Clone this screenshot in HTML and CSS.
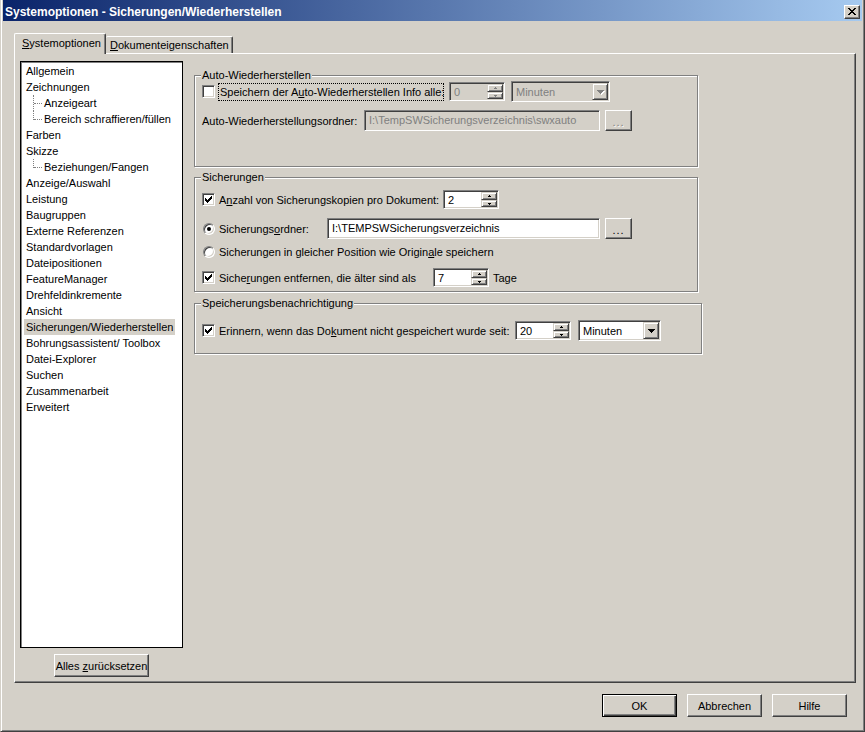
FILE: index.html
```html
<!DOCTYPE html>
<html lang="de">

<head>
    <meta charset="UTF-8">
    <meta name="viewport" content="width=device-width, initial-scale=1.0">
    <title>Systemoptionen - Sicherungen/Wiederherstellen</title>
    <link rel="stylesheet" href="styles.css">
</head>

<body>
    <div class="window">
        <div class="titlebar">
            <span class="title">Systemoptionen - Sicherungen/Wiederherstellen</span>
            <span class="close-btn">
                <svg width="8" height="7" viewBox="0 0 8 7" shape-rendering="crispEdges">
                    <path d="M0 0h2v1H0z M6 0h2v1H6z M1 1h2v1H1z M5 1h2v1H5z M2 2h4v1H2z M3 3h2v1H3z M2 4h4v1H2z M1 5h2v1H1z M5 5h2v1H5z M0 6h2v1H0z M6 6h2v1H6z" fill="#000" />
                </svg>
            </span>
        </div>

        <div class="dialog">
            <div class="tabs">
                <div class="tab tab-active"><u>S</u>ystemoptionen</div>
                <div class="tab"><u>D</u>okumenteigenschaften</div>
            </div>

            <div class="panel">
                <!-- linke Seite: Baum + Zuruecksetzen -->
                <div class="side">
                    <ul class="tree">
                        <li>Allgemein</li>
                        <li>Zeichnungen</li>
                        <li class="sub">Anzeigeart</li>
                        <li class="sub last">Bereich schraffieren/füllen</li>
                        <li>Farben</li>
                        <li>Skizze</li>
                        <li class="sub last">Beziehungen/Fangen</li>
                        <li>Anzeige/Auswahl</li>
                        <li>Leistung</li>
                        <li>Baugruppen</li>
                        <li>Externe Referenzen</li>
                        <li>Standardvorlagen</li>
                        <li>Dateipositionen</li>
                        <li>FeatureManager</li>
                        <li>Drehfeldinkremente</li>
                        <li>Ansicht</li>
                        <li class="selected">Sicherungen/Wiederherstellen</li>
                        <li>Bohrungsassistent/ Toolbox</li>
                        <li>Datei-Explorer</li>
                        <li>Suchen</li>
                        <li>Zusammenarbeit</li>
                        <li>Erweitert</li>
                    </ul>
                    <button class="btn btn-reset">Alles <u>z</u>urücksetzen</button>
                </div>

                <!-- rechte Seite: Gruppen -->
                <div class="content">
                    <div class="group group-auto">
                        <div class="group-title">Auto-Wiederherstellen</div>
                        <div class="row row-auto-save">
                            <span class="check"></span>
                            <span class="label label-focus">Speichern der A<u>u</u>to-Wiederherstellen Info alle:</span>
                            <div class="spin disabled">
                                <span class="spin-val">0</span>
                                <span class="spin-btns">
                                    <span class="spin-up">
                                        <svg width="3" height="2" viewBox="0 0 3 2" shape-rendering="crispEdges"><path d="M1 0h1v1h1v1H0V1h1z" /></svg>
                                    </span>
                                    <span class="spin-down">
                                        <svg width="3" height="2" viewBox="0 0 3 2" shape-rendering="crispEdges"><path d="M0 0h3v1H2v1H1V1H0z" /></svg>
                                    </span>
                                </span>
                            </div>
                            <div class="combo combo-auto disabled">
                                <span class="combo-val">Minuten</span>
                                <span class="combo-btn">
                                    <svg width="7" height="4" viewBox="0 0 7 4" shape-rendering="crispEdges"><path d="M0 0h7v1H6v1H5v1H4v1H3V3H2V2H1V1H0z" /></svg>
                                </span>
                            </div>
                        </div>
                        <div class="row row-auto-dir">
                            <span class="label w-auto-dir">Auto-Wiederherstellungsordner:</span>
                            <div class="edit edit-auto disabled">I:\TempSWSicherungsverzeichnis\swxauto</div>
                            <button class="btn btn-browse disabled">...</button>
                        </div>
                    </div>

                    <div class="group group-backup">
                        <div class="group-title">Sicherungen</div>
                        <div class="row row-copies">
                            <span class="check">
                                <svg width="7" height="7" viewBox="0 0 7 7" shape-rendering="crispEdges"><path d="M0 2h1v3H0z M1 3h1v3H1z M2 4h1v3H2z M3 3h1v3H3z M4 2h1v3H4z M5 1h1v3H5z M6 0h1v3H6z" /></svg>
                            </span>
                            <span class="label w-copies">A<u>n</u>zahl von Sicherungskopien pro Dokument:</span>
                            <div class="spin">
                                <span class="spin-val">2</span>
                                <span class="spin-btns">
                                    <span class="spin-up">
                                        <svg width="3" height="2" viewBox="0 0 3 2" shape-rendering="crispEdges"><path d="M1 0h1v1h1v1H0V1h1z" /></svg>
                                    </span>
                                    <span class="spin-down">
                                        <svg width="3" height="2" viewBox="0 0 3 2" shape-rendering="crispEdges"><path d="M0 0h3v1H2v1H1V1H0z" /></svg>
                                    </span>
                                </span>
                            </div>
                        </div>
                        <div class="row row-folder">
                            <span class="radio radio-on"></span>
                            <span class="label w-folder">Sicherungs<u>o</u>rdner:</span>
                            <div class="edit edit-folder">I:\TEMPSWSicherungsverzeichnis</div>
                            <button class="btn btn-browse">...</button>
                        </div>
                        <div class="row row-same">
                            <span class="radio"></span>
                            <span class="label">Sicherungen in gleicher Position wie Origin<u>a</u>le speichern</span>
                        </div>
                        <div class="row row-remove">
                            <span class="check">
                                <svg width="7" height="7" viewBox="0 0 7 7" shape-rendering="crispEdges"><path d="M0 2h1v3H0z M1 3h1v3H1z M2 4h1v3H2z M3 3h1v3H3z M4 2h1v3H4z M5 1h1v3H5z M6 0h1v3H6z" /></svg>
                            </span>
                            <span class="label w-remove">Siche<u>r</u>ungen entfernen, die älter sind als</span>
                            <div class="spin">
                                <span class="spin-val">7</span>
                                <span class="spin-btns">
                                    <span class="spin-up">
                                        <svg width="3" height="2" viewBox="0 0 3 2" shape-rendering="crispEdges"><path d="M1 0h1v1h1v1H0V1h1z" /></svg>
                                    </span>
                                    <span class="spin-down">
                                        <svg width="3" height="2" viewBox="0 0 3 2" shape-rendering="crispEdges"><path d="M0 0h3v1H2v1H1V1H0z" /></svg>
                                    </span>
                                </span>
                            </div>
                            <span class="label unit">Tage</span>
                        </div>
                    </div>

                    <div class="group group-notify">
                        <div class="group-title">Speicherungsbenachrichtigung</div>
                        <div class="row row-remind">
                            <span class="check">
                                <svg width="7" height="7" viewBox="0 0 7 7" shape-rendering="crispEdges"><path d="M0 2h1v3H0z M1 3h1v3H1z M2 4h1v3H2z M3 3h1v3H3z M4 2h1v3H4z M5 1h1v3H5z M6 0h1v3H6z" /></svg>
                            </span>
                            <span class="label w-remind">Erinnern, wenn das Do<u>k</u>ument nicht gespeichert wurde seit:</span>
                            <div class="spin">
                                <span class="spin-val">20</span>
                                <span class="spin-btns">
                                    <span class="spin-up">
                                        <svg width="3" height="2" viewBox="0 0 3 2" shape-rendering="crispEdges"><path d="M1 0h1v1h1v1H0V1h1z" /></svg>
                                    </span>
                                    <span class="spin-down">
                                        <svg width="3" height="2" viewBox="0 0 3 2" shape-rendering="crispEdges"><path d="M0 0h3v1H2v1H1V1H0z" /></svg>
                                    </span>
                                </span>
                            </div>
                            <div class="combo combo-remind">
                                <span class="combo-val">Minuten</span>
                                <span class="combo-btn">
                                    <svg width="7" height="4" viewBox="0 0 7 4" shape-rendering="crispEdges"><path d="M0 0h7v1H6v1H5v1H4v1H3V3H2V2H1V1H0z" /></svg>
                                </span>
                            </div>
                        </div>
                    </div>
                </div>
            </div>

            <div class="footer">
                <button class="btn btn-default">OK</button>
                <button class="btn">Abbrechen</button>
                <button class="btn">Hilfe</button>
            </div>
        </div>
    </div>
</body>

</html>
```

FILE: styles.css
```css
* {
    margin: 0;
    padding: 0;
    box-sizing: border-box;
}

body {
    background-color: #d4d0c8;
    font-family: "Liberation Sans", Arial, sans-serif;
    font-size: 11px;
    color: #000;
}

ul,
li {
    list-style: none;
}

/* Fensterrahmen */
.window {
    display: flex;
    flex-direction: column;
    width: 865px;
    height: 732px;
    padding: 0 2px 2px 2px;
    border-left: 1px solid #d4d0c8;
    border-right: 1px solid #404040;
    border-bottom: 1px solid #404040;
    box-shadow: inset 1px 0 #fff, inset -1px -1px #808080;
}

.titlebar {
    display: flex;
    align-items: center;
    justify-content: space-between;
    height: 21px;
    padding: 2px 2px 0 2px;
    background: linear-gradient(to right, #0a246a, #a6caf0);
    color: #fff;
    font-size: 12px;
    font-weight: bold;
}

.close-btn {
    display: flex;
    align-items: center;
    justify-content: center;
    width: 16px;
    height: 14px;
    background-color: #d4d0c8;
    border: 1px solid;
    border-color: #fff #404040 #404040 #fff;
    box-shadow: inset -1px -1px #808080;
}

.close-btn svg {
    display: block;
}

.dialog {
    flex: 1;
    padding: 12px 6px 0 11px;
}

/* Reiter */
.tabs {
    display: flex;
    align-items: flex-end;
    height: 20px;
}

.tab {
    width: 127px;
    height: 17px;
    padding: 2px 0 0 4px;
    line-height: 13px;
    white-space: nowrap;
    border-top: 1px solid #fff;
    border-right: 1px solid #404040;
    border-radius: 2px 2px 0 0;
    box-shadow: inset -1px 0 #808080;
}

.tab-active {
    position: relative;
    z-index: 1;
    width: 92px;
    height: 21px;
    margin-bottom: -1px;
    padding: 3px 0 0 7px;
    border-left: 1px solid #fff;
    background-color: #d4d0c8;
}

.panel {
    display: flex;
    height: 630px;
    padding: 7px 0 0 5px;
    border-top: 1px solid #fff;
    border-left: 1px solid #fff;
    border-right: 1px solid #404040;
    border-bottom: 1px solid #404040;
    box-shadow: inset -1px -1px #808080;
}

/* Baum */
.side {
    display: flex;
    flex-direction: column;
    width: 163px;
}

.tree {
    height: 587px;
    padding: 1px 0 0 3px;
    background-color: #fff;
    border: 1px solid #000;
    box-shadow: inset 1px 1px #808080;
}

.tree li {
    position: relative;
    width: fit-content;
    height: 16px;
    padding: 0 2px;
    line-height: 16px;
    white-space: nowrap;
}

.tree li.sub {
    padding-left: 20px;
}

.tree li.sub::before {
    content: '';
    position: absolute;
    left: 9px;
    top: 0;
    bottom: 0;
    border-left: 1px dotted #808080;
}

.tree li.sub.last::before {
    bottom: auto;
    height: 9px;
}

.tree li.sub::after {
    content: '';
    position: absolute;
    left: 10px;
    top: 8px;
    width: 8px;
    border-top: 1px dotted #808080;
}

.tree li.selected {
    background-color: #d4d0c8;
}

/* Schaltflaechen */
.btn {
    width: 75px;
    height: 23px;
    font: inherit;
    color: #000;
    background-color: #d4d0c8;
    border: 1px solid;
    border-color: #fff #404040 #404040 #fff;
    box-shadow: inset -1px -1px #808080;
}

.btn-default {
    border-color: #000;
    box-shadow: inset 1px 1px #fff, inset -1px -1px #404040, inset -2px -2px #808080;
}

.btn-reset {
    width: 95px;
    margin: 6px auto 0;
}

.btn-browse {
    width: 27px;
    height: 21px;
    margin-left: 5px;
    padding-top: 2px;
    letter-spacing: 1px;
}

.btn-browse.disabled {
    color: #808080;
    text-shadow: 1px 1px #fff;
}

/* Gruppen rechts */
.content {
    display: flex;
    flex-direction: column;
    margin: 14px 0 0 11px;
}

.group {
    width: 504px;
    padding: 0 7px;
    border: 1px solid #808080;
    box-shadow: inset 1px 1px #fff, 1px 1px #fff;
}

.group-title {
    width: fit-content;
    margin: -7px 0 0 -1px;
    padding: 0 1px;
    line-height: 13px;
    background-color: #d4d0c8;
}

.group-auto {
    padding-bottom: 35px;
}

.group-backup {
    margin-top: 10px;
    padding-bottom: 4px;
}

.group-notify {
    width: 508px;
    margin-top: 11px;
    padding-bottom: 12px;
}

.row {
    display: flex;
    align-items: center;
    white-space: nowrap;
}

.row-auto-save {
    height: 21px;
    margin-top: -1px;
}

.row-auto-dir {
    height: 21px;
    margin-top: 8px;
}

.row-copies {
    height: 19px;
    margin-top: 6px;
}

.row-folder {
    height: 21px;
    margin-top: 9px;
}

.row-same {
    height: 16px;
    margin-top: 5px;
}

.row-remove {
    height: 19px;
    margin-top: 8px;
}

.row-remind {
    height: 21px;
    margin-top: 10px;
}

.label-focus {
    width: 226px;
    height: 18px;
    margin: 0 5px 0 -1px;
    padding: 0 1px;
    line-height: 16px;
    border: 1px dotted #000;
}

.w-auto-dir {
    width: 162px;
}

.w-copies {
    width: 224px;
}

.w-folder {
    width: 108px;
}

.w-remove {
    width: 214px;
}

.w-remind {
    width: 296px;
}

.unit {
    margin-left: 4px;
}

/* Kontrollkaestchen und Optionsfelder */
.check {
    flex: none;
    width: 13px;
    height: 13px;
    margin-right: 4px;
    padding: 2px 0 0 2px;
    background-color: #fff;
    border: 1px solid;
    border-color: #808080 #fff #fff #808080;
    box-shadow: inset 1px 1px #404040, inset -1px -1px #d4d0c8;
}

.check svg {
    display: block;
}

.radio {
    flex: none;
    display: flex;
    align-items: center;
    justify-content: center;
    width: 12px;
    height: 12px;
    margin: 0 4px 0 1px;
    background-color: #fff;
    border: 1px solid;
    border-color: #808080 #fff #fff #808080;
    border-radius: 50%;
    box-shadow: inset 1px 1px #404040, inset -1px -1px #d4d0c8;
}

.radio-on::after {
    content: '';
    width: 4px;
    height: 4px;
    border-radius: 50%;
    background-color: #000;
}

/* Eingabefelder */
.edit,
.spin,
.combo {
    flex: none;
    background-color: #fff;
    border: 1px solid;
    border-color: #808080 #fff #fff #808080;
    box-shadow: inset 1px 1px #404040, inset -1px -1px #d4d0c8;
}

.edit {
    height: 21px;
    padding: 1px 0 0 4px;
    line-height: 17px;
    overflow: hidden;
}

.edit-auto {
    width: 236px;
}

.edit-folder {
    width: 273px;
}

.spin {
    display: flex;
    width: 56px;
    height: 19px;
    padding: 1px;
}

.spin-val {
    flex: 1;
    padding: 1px 0 0 3px;
    line-height: 14px;
}

.spin-btns {
    display: flex;
    flex-direction: column;
    width: 16px;
}

.spin-up,
.spin-down,
.combo-btn {
    display: flex;
    align-items: center;
    justify-content: center;
    background-color: #d4d0c8;
    border: 1px solid;
    border-color: #d4d0c8 #404040 #404040 #d4d0c8;
    box-shadow: inset 1px 1px #fff, inset -1px -1px #808080;
}

.spin-up {
    height: 8px;
}

.spin-down {
    height: 7px;
}

.spin svg,
.combo svg {
    display: block;
}

.combo {
    display: flex;
    height: 21px;
    padding: 1px;
}

.combo-auto {
    width: 99px;
    margin-left: 6px;
}

.combo-remind {
    width: 83px;
    margin-left: 7px;
}

.combo-val {
    flex: 1;
    padding: 1px 0 0 3px;
    line-height: 16px;
}

.combo-btn {
    width: 16px;
    height: 17px;
}

.disabled {
    color: #808080;
}

.edit.disabled,
.spin.disabled,
.combo.disabled {
    background-color: #d4d0c8;
}

.disabled svg {
    fill: #808080;
}

.combo.disabled svg {
    filter: drop-shadow(1px 1px 0 #fff);
}

/* untere Schaltflaechen */
.footer {
    display: flex;
    justify-content: flex-end;
    gap: 10px;
    padding: 11px 9px 0 0;
}
```
